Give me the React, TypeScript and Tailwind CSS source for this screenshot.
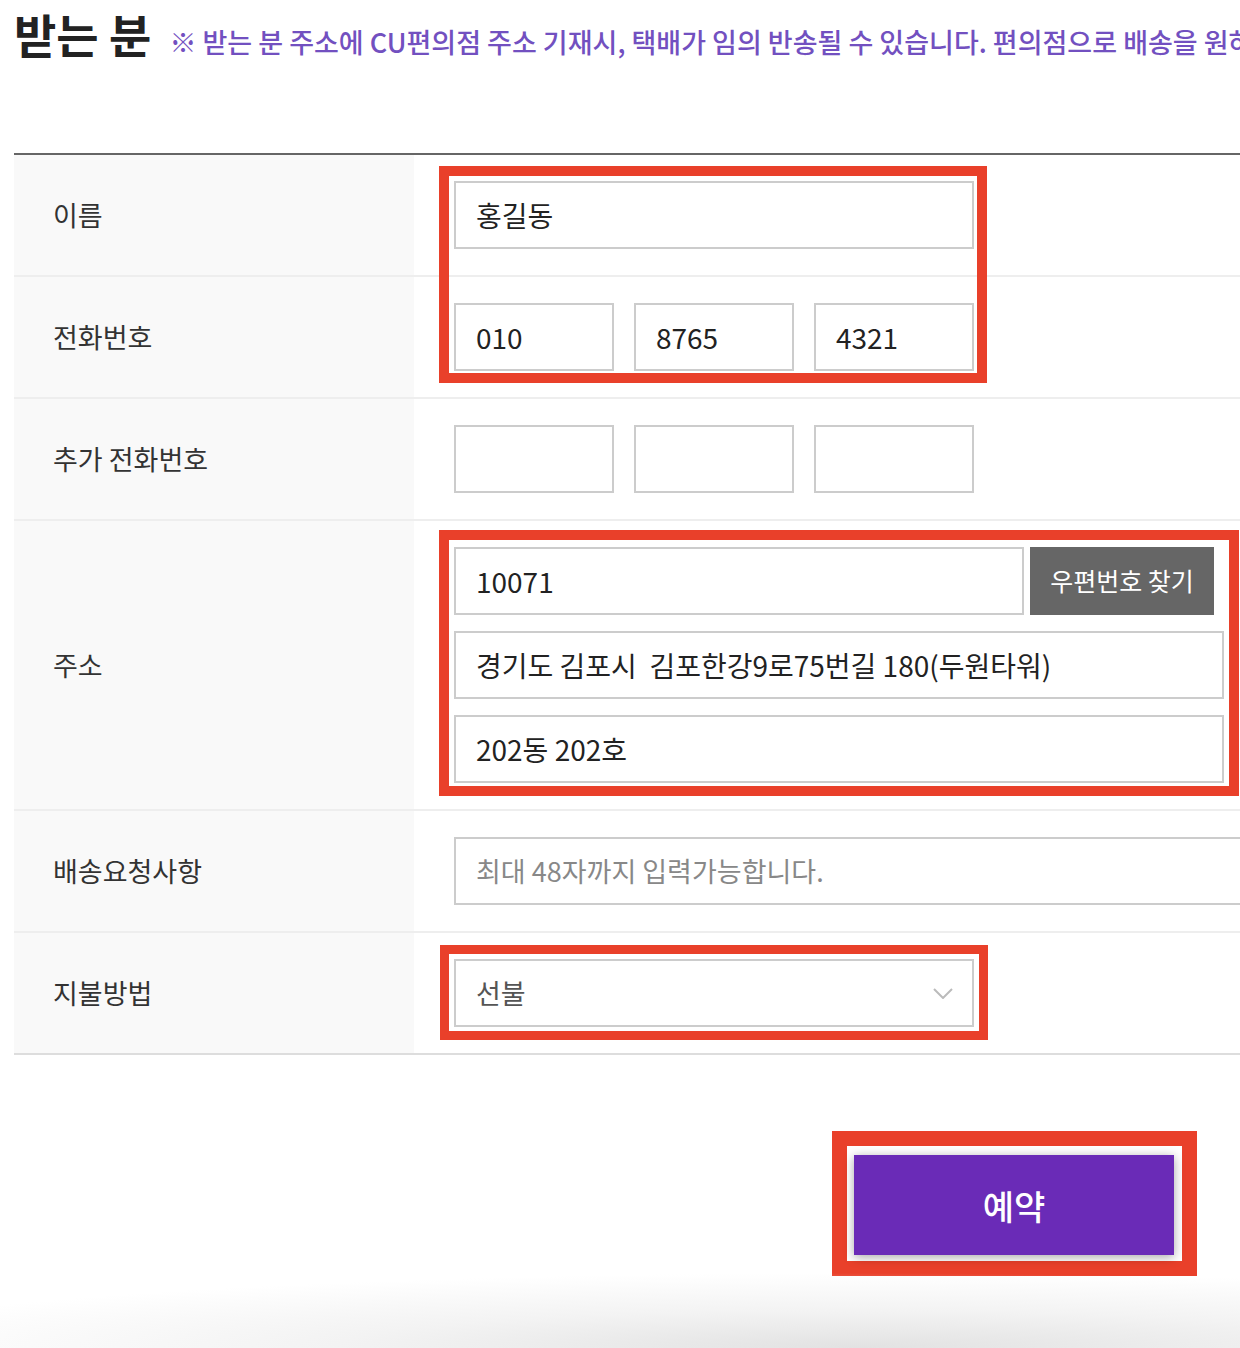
import { ReactNode } from 'react';

const FONT = '"Noto Sans CJK KR", "Noto Sans", sans-serif';

function Row({ label, children, tall }: { label: string; children: ReactNode; tall?: boolean }) {
  return (
    <div className={`flex border-b-2 border-[#eeeeee] ${tall ? 'h-[290px]' : 'h-[122px]'}`}>
      <div className="flex w-[400px] shrink-0 items-center bg-[#f9f9f9] pl-[39px] text-[27px] text-[#333]">
        {label}
      </div>
      <div className="flex flex-1 flex-col justify-center gap-4 pl-10">{children}</div>
    </div>
  );
}

function Field({ value, className = 'w-[520px]', placeholder }: { value?: string; className?: string; placeholder?: string }) {
  return (
    <div
      className={`flex h-[68px] shrink-0 items-center border-2 border-[#cccccc] bg-white px-5 ${className} ${
        value ? 'text-[28px] text-[#222]' : 'text-[27px] text-[#888]'
      }`}
    >
      {value ?? placeholder}
    </div>
  );
}

function PhoneFields({ parts }: { parts: string[] }) {
  return (
    <div className="flex gap-5">
      {parts.map((p, i) => (
        <Field key={i} value={p || undefined} className="w-[160px]" />
      ))}
    </div>
  );
}

export default function App() {
  return (
    <div className="relative h-[1348px] w-[1240px] overflow-hidden bg-white" style={{ fontFamily: FONT }}>
      {/* Header */}
      <div className="flex items-baseline gap-[18px] whitespace-nowrap pl-[14px] leading-[66px]">
        <h2 className="text-[46px] font-bold text-[#222]">받는 분</h2>
        <p className="text-[27px] font-medium text-[#7250c0]">
          ※ 받는 분 주소에 CU편의점 주소 기재시, 택배가 임의 반송될 수 있습니다. 편의점으로 배송을 원하시면
        </p>
      </div>

      {/* Form table */}
      <div className="ml-[14px] mt-[78px] border-t-2 border-[#666]">
        <Row label="이름">
          <Field value="홍길동" />
        </Row>
        <Row label="전화번호">
          <PhoneFields parts={['010', '8765', '4321']} />
        </Row>
        <Row label="추가 전화번호">
          <PhoneFields parts={['', '', '']} />
        </Row>
        <Row label="주소" tall>
          <div className="flex gap-[6px]">
            <Field value="10071" className="w-[570px]" />
            <button className="h-[68px] w-[184px] bg-[#666] text-[25px] text-white">우편번호 찾기</button>
          </div>
          <Field value="경기도 김포시  김포한강9로75번길 180(두원타워)" className="w-[770px] whitespace-pre" />
          <Field value="202동 202호" className="w-[770px]" />
        </Row>
        <Row label="배송요청사항">
          <Field placeholder="최대 48자까지 입력가능합니다." className="w-[820px]" />
        </Row>
        <div className="flex h-[122px] border-b-2 border-[#dddddd]">
          <div className="flex w-[400px] shrink-0 items-center bg-[#f9f9f9] pl-[39px] text-[27px] text-[#333]">
            지불방법
          </div>
          <div className="flex flex-1 items-center pl-10">
            <div className="flex h-[68px] w-[520px] items-center justify-between border-2 border-[#cccccc] bg-white pl-5 pr-[19px] text-[27px] text-[#555]">
              선불
              <svg width="20" height="11" viewBox="0 0 20 11" fill="none">
                <path d="M1 1l9 9 9-9" stroke="#bbbbbb" strokeWidth="2" />
              </svg>
            </div>
          </div>
        </div>
      </div>

      {/* Submit */}
      <div className="mt-[76px] flex justify-end pr-[43px]">
        <div className="border-[15px] border-[#e9402a] bg-white pb-[6px] pl-[7px] pr-[8px] pt-[9px]">
          <button className="h-[100px] w-[320px] bg-[#6a2bb7] text-[34px] font-medium text-white shadow-[0_2px_10px_rgba(0,0,0,0.35)]">
            예약
          </button>
        </div>
      </div>

      {/* Bottom shadow */}
      <div className="absolute bottom-0 left-0 h-[90px] w-full bg-[radial-gradient(ellipse_1050px_75px_at_860px_100%,#e2e2e2_0%,#f3f3f3_50%,rgba(255,255,255,0)_100%)]" />

      {/* Red annotation frames */}
      <div className="pointer-events-none absolute left-[439px] top-[166px] h-[217px] w-[548px] border-[10px] border-[#e9402a]" />
      <div className="pointer-events-none absolute left-[439px] top-[530px] h-[266px] w-[800px] border-[10px] border-[#e9402a]" />
      <div className="pointer-events-none absolute left-[440px] top-[945px] h-[95px] w-[548px] border-[9px] border-[#e9402a]" />
    </div>
  );
}
